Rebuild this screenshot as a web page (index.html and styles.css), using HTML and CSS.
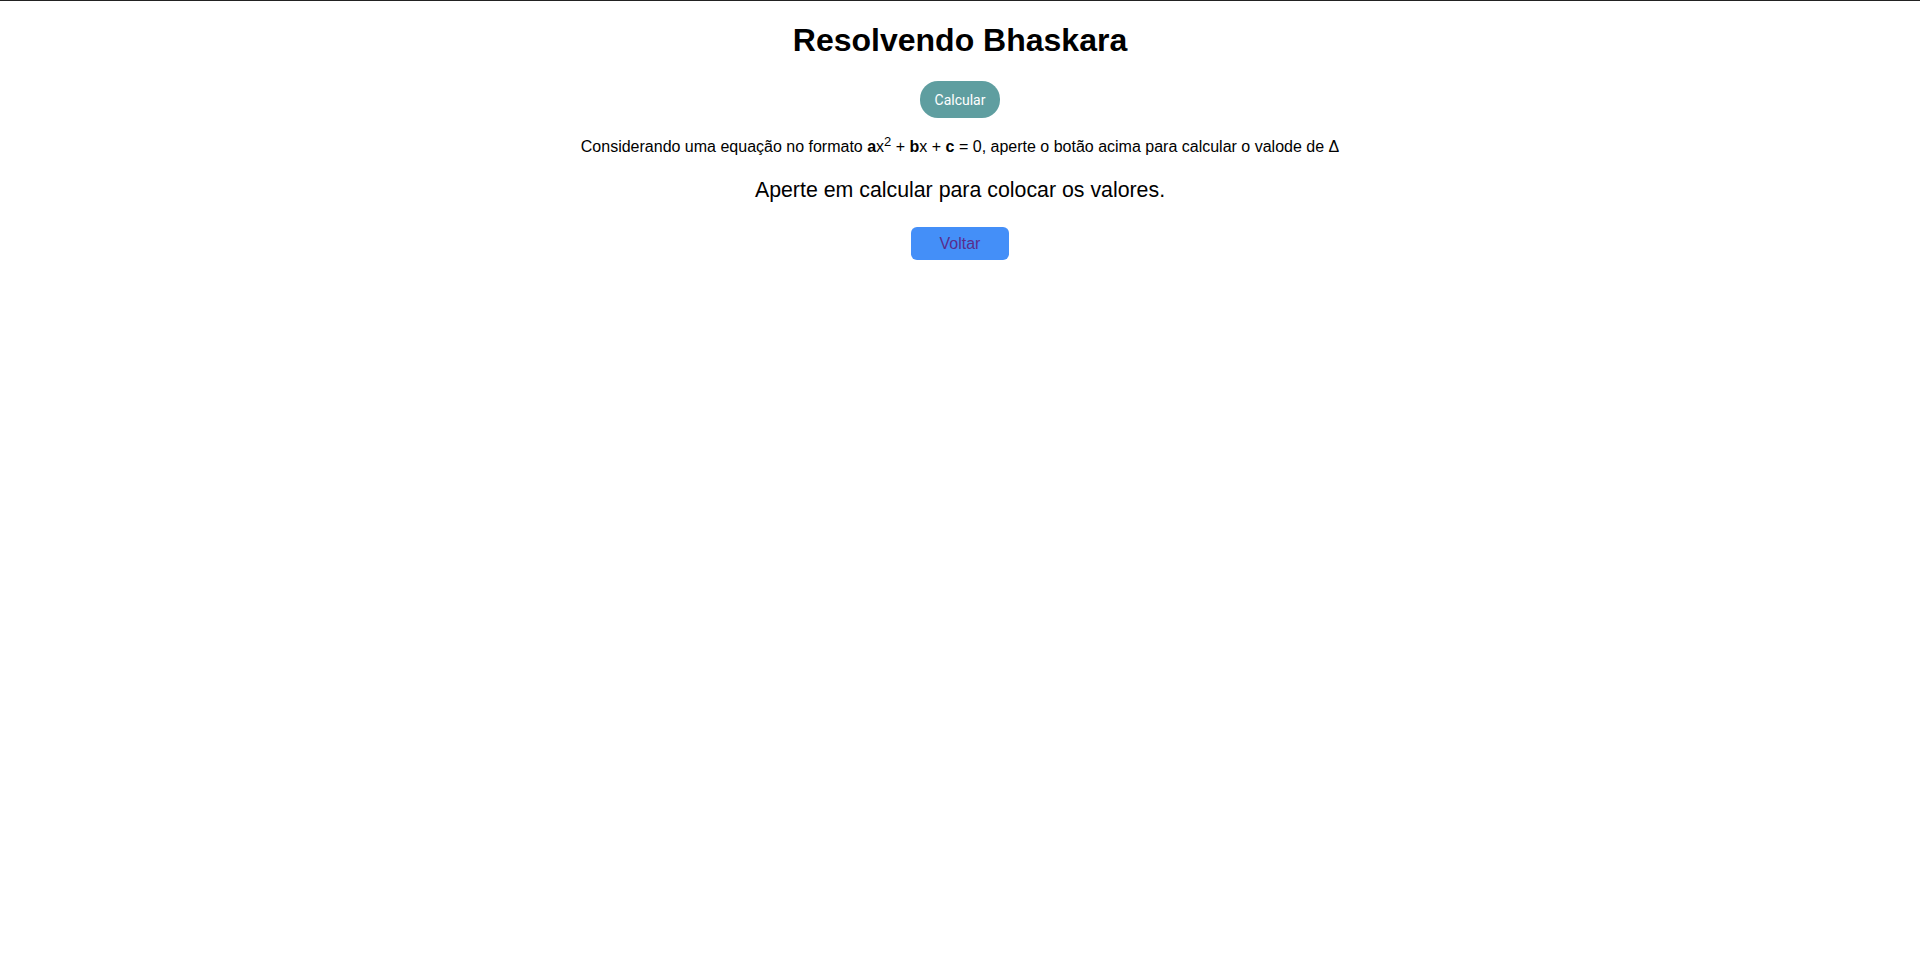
FILE: index.html
```html
<!DOCTYPE html>
<html lang="pt">
<head>
<meta charset="utf-8">
<title>Resolvendo Bhaskara</title>
<link rel="stylesheet" href="styles.css">
</head>
<body>
<main class="page">
  <h1 class="title">Resolvendo Bhaskara</h1>
  <button class="btn-calc" type="button">Calcular</button>
  <p class="desc">Considerando uma equação no formato <b>a</b>x<sup>2</sup> + <b>b</b>x + <b>c</b> = 0, aperte o botão acima para calcular o valode de Δ</p>
  <p class="result">Aperte em calcular para colocar os valores.</p>
  <a class="btn-back" href="#">Voltar</a>
</main>
</body>
</html>
```

FILE: styles.css
```css
html, body {
  margin: 0;
  padding: 0;
  background: #ffffff;
}
body {
  border-top: 1px solid #222222;
  font-family: "Liberation Sans", Arial, sans-serif;
  color: #000000;
}
.page {
  display: flex;
  flex-direction: column;
  align-items: center;
  text-align: center;
}
.title {
  font-size: 32px;
  font-weight: bold;
  margin: 21px 0 22px 0;
}
.btn-calc {
  background: #5f9ea0;
  color: #ffffff;
  border: none;
  border-radius: 18px;
  height: 37px;
  width: 80px;
  padding: 0;
  font-family: Roboto, "Liberation Sans", sans-serif;
  font-size: 14px;
}
.desc {
  font-size: 16px;
  margin: 16px 0 0 0;
}
.desc sup {
  font-size: 13px;
}
.result {
  font-size: 21.33px;
  margin: 22px 0 0 0;
}
.btn-back {
  margin-top: 24px;
  display: block;
  width: 98px;
  height: 33px;
  line-height: 33px;
  background: #448ff8;
  color: #5a2d8c;
  border-radius: 6px;
  text-decoration: none;
  font-size: 16px;
}
```
